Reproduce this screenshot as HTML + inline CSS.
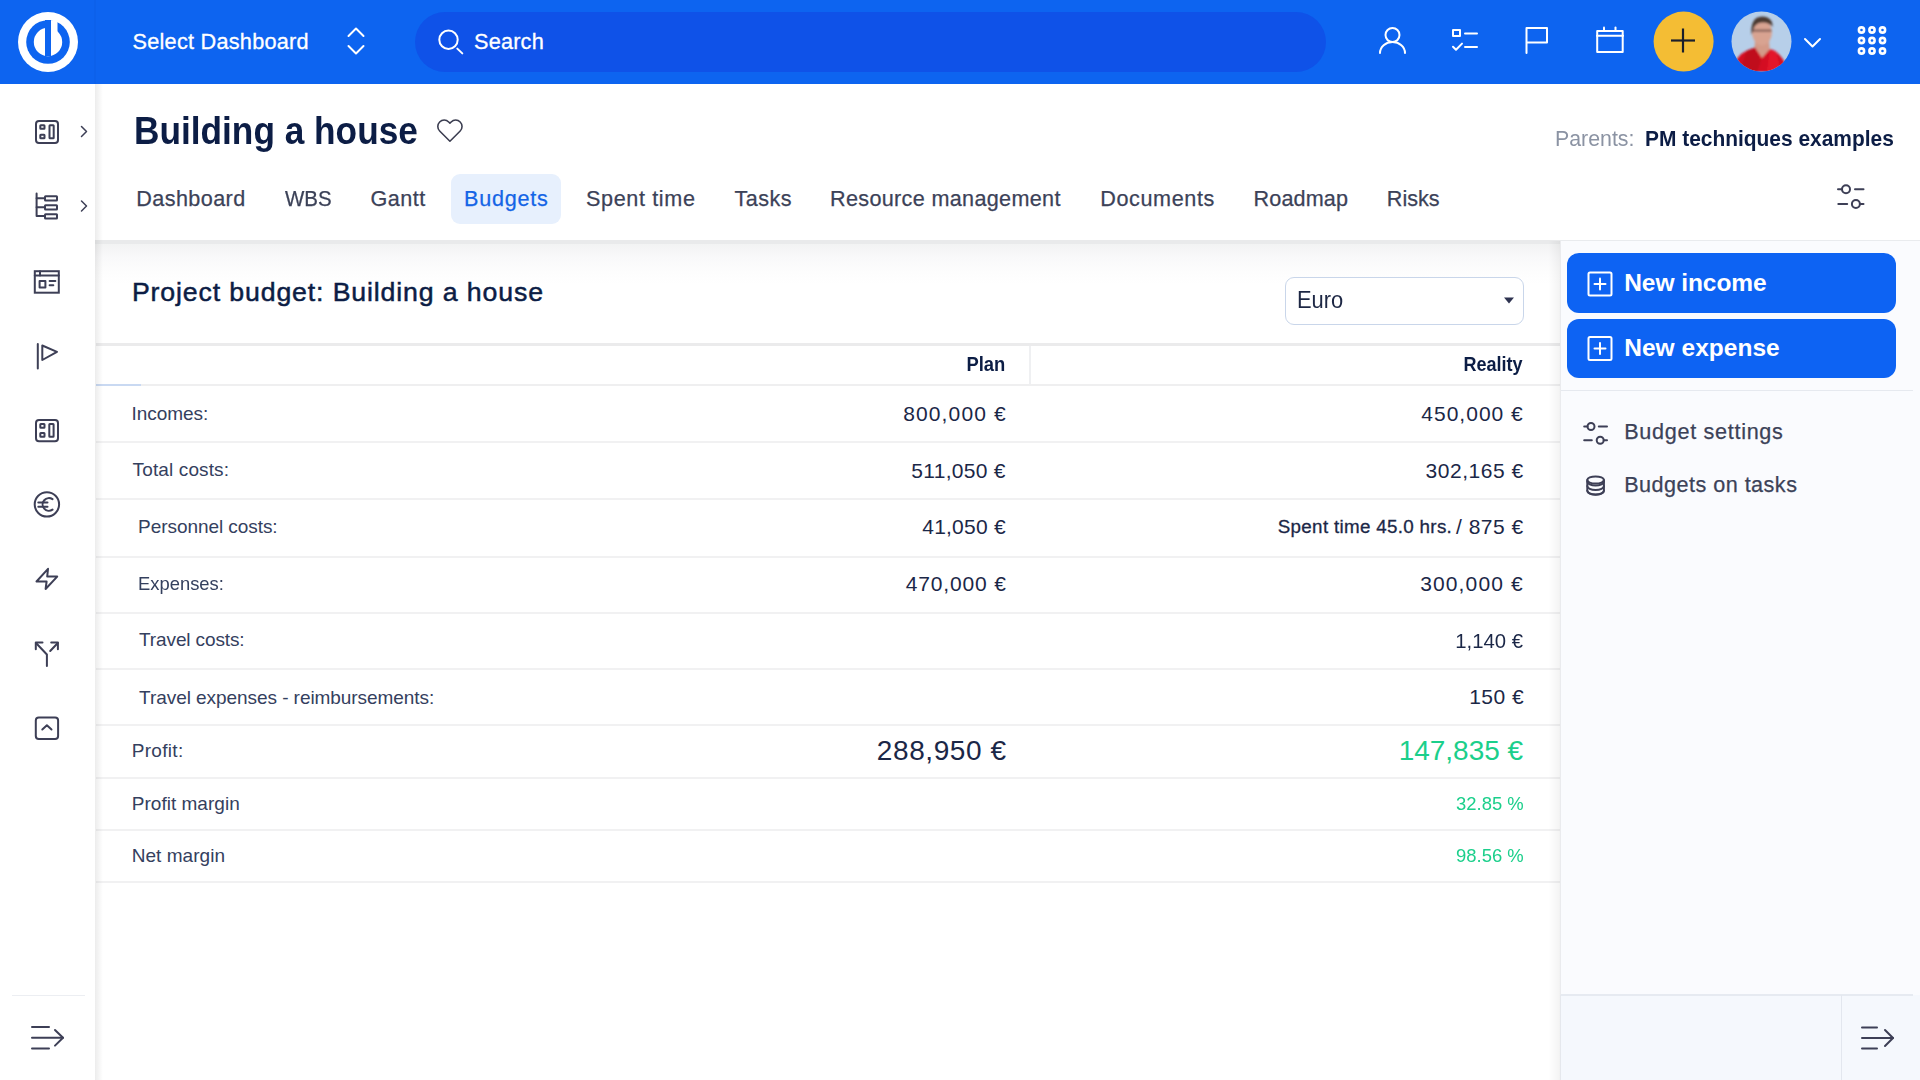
<!DOCTYPE html>
<html><head><meta charset="utf-8">
<style>
*{box-sizing:border-box;margin:0;padding:0}
html,body{width:1920px;height:1080px;overflow:hidden;background:#fff;font-family:"Liberation Sans",sans-serif}
.a{position:absolute}
.t{position:absolute;white-space:nowrap;line-height:1}
svg{position:absolute;overflow:visible;left:0;top:0}
.si{stroke:#3d3f56;stroke-width:2;fill:none;stroke-linecap:round;stroke-linejoin:round}
.wi{stroke:#fff;stroke-width:2;fill:none;stroke-linecap:round;stroke-linejoin:round}
.hl{position:absolute;left:96px;width:1464px;height:2px;background:#f1f1f2}
</style></head><body>

<!-- TOP BAR -->
<div class="a" style="left:0;top:0;width:1920px;height:84px;background:#0d64f0"></div>
<div class="a" style="left:94px;top:0;width:2px;height:84px;background:rgba(0,0,40,0.025)"></div>
<svg width="96" height="84">
  <circle cx="48" cy="42" r="30" fill="#fff"/>
  <circle cx="48" cy="42" r="21.8" fill="#0d64f0"/>
  <circle cx="48" cy="42" r="14.2" fill="#fff"/>
  <rect x="45" y="20" width="6" height="36" fill="#0d64f0"/>
  <rect x="51" y="20.4" width="6.5" height="12" fill="#fff"/>
</svg>
<svg width="1" height="1">
  <polyline class="wi" points="348.5,36 356,28.5 363.5,36"/>
  <polyline class="wi" points="348.5,46 356,53.5 363.5,46"/>
</svg>
<div class="a" style="left:415px;top:12px;width:911px;height:60px;border-radius:30px;background:#0f52e8"></div>
<svg width="1" height="1">
  <circle class="wi" cx="448.5" cy="39.8" r="9.2"/>
  <line class="wi" x1="457.3" y1="48.6" x2="462.3" y2="53.4"/>
</svg>
<svg width="1" height="1">
  <circle class="wi" cx="1392.5" cy="35" r="7"/>
  <path class="wi" d="M1380 53 a12.5 11 0 0 1 25 0"/>
  <rect class="wi" x="1453" y="30" width="7" height="6" stroke-linecap="butt"/>
  <line class="wi" x1="1465" y1="33.5" x2="1477" y2="33.5"/>
  <polyline class="wi" points="1453,46.8 1456,49.8 1462,43.6" stroke-width="2.3"/>
  <line class="wi" x1="1465" y1="47" x2="1477" y2="47"/>
  <polyline class="wi" points="1526.5,53 1526.5,28 1547,28 1547,42.5 1527,42.5" stroke-linecap="butt"/>
  <rect class="wi" x="1597.2" y="31" width="25.5" height="21" stroke-width="2.2"/>
  <line class="wi" x1="1597" y1="35.8" x2="1623" y2="35.8" stroke-width="2.2"/>
  <line class="wi" x1="1604" y1="27.5" x2="1604" y2="31" stroke-width="2.2"/>
  <line class="wi" x1="1615.5" y1="27.5" x2="1615.5" y2="31" stroke-width="2.2"/>
  <circle cx="1683.6" cy="41.6" r="30" fill="#f4bd34" stroke="none"/>
  <line x1="1671" y1="40.5" x2="1695" y2="40.5" stroke="#1b1f2b" stroke-width="2.2"/>
  <line x1="1683" y1="28.5" x2="1683" y2="52.5" stroke="#1b1f2b" stroke-width="2.2"/>
  <polyline class="wi" points="1805,39 1812.5,46.5 1820,39"/>
  <g fill="none" stroke="#fff" stroke-width="2.6">
    <circle cx="1861.5" cy="30" r="2.6"/><circle cx="1872" cy="30" r="2.6"/><circle cx="1882.5" cy="30" r="2.6"/>
    <circle cx="1861.5" cy="40.5" r="2.6"/><circle cx="1872" cy="40.5" r="2.6"/><circle cx="1882.5" cy="40.5" r="2.6"/>
    <circle cx="1861.5" cy="51" r="2.6"/><circle cx="1872" cy="51" r="2.6"/><circle cx="1882.5" cy="51" r="2.6"/>
  </g>
</svg>
<svg style="left:1731px;top:11px" width="61" height="61">
  <defs><clipPath id="av"><circle cx="30.5" cy="30.5" r="30"/></clipPath>
  <filter id="bl" x="-20%" y="-20%" width="140%" height="140%"><feGaussianBlur stdDeviation="1.2"/></filter></defs>
  <g clip-path="url(#av)">
    <rect width="61" height="61" fill="#b7cfe9"/>
    <g filter="url(#bl)">
      <path d="M24 30 L38 30 L39 42 L31 50 L23 42 Z" fill="#d39a88"/>
      <ellipse cx="31" cy="21.5" rx="10" ry="13" fill="#d8a391"/>
      <path d="M20.5 24 Q19 6 31 5.5 Q42 6 41.5 16 Q38 11 31 11.5 Q23 12 22 20 Z" fill="#4b3b33"/>
      <rect x="21.5" y="18.5" width="19" height="2.2" fill="#6b4c45" opacity="0.75"/>
      <path d="M0 61 Q5 44 16 39.5 L24 36.5 L31 47 L39 38 Q52 42 58 61 Z" fill="#d40f22"/>
      <path d="M16 39.5 L24 36.5 L30 50 L26 61 L8 61 Z" fill="#b30c1a" opacity="0.6"/>
      <path d="M39 38 L45 40 L50 61 L36 61 Z" fill="#ec1a30" opacity="0.6"/>
    </g>
  </g>
</svg>

<!-- HEADER (white) -->
<svg width="1" height="1">
  <g transform="translate(436 116.6) scale(1.16)"><path d="M20.84 4.61a5.5 5.5 0 0 0-7.78 0L12 5.67l-1.06-1.06a5.5 5.5 0 0 0-7.78 7.78l1.06 1.06L12 21.23l7.78-7.78 1.06-1.06a5.5 5.5 0 0 0 0-7.78z" fill="none" stroke="#3b3d50" stroke-width="1.35" stroke-linejoin="round"/></g>
</svg>
<div class="a" style="left:451px;top:174px;width:110px;height:50px;border-radius:9px;background:#e7f0fd"></div>
<svg width="1" height="1">
  <g class="si" stroke-width="1.7">
    <circle cx="1846" cy="189.3" r="4"/>
    <line x1="1838" y1="189.3" x2="1842" y2="189.3"/>
    <line x1="1855" y1="189.3" x2="1863.5" y2="189.3"/>
    <circle cx="1855.9" cy="204" r="4"/>
    <line x1="1838.3" y1="204" x2="1847.2" y2="204"/>
    <line x1="1859.9" y1="204" x2="1863.5" y2="204"/>
  </g>
</svg>

<!-- MAIN CONTENT top shadow -->
<div class="a" style="left:95px;top:240px;width:1465px;height:4px;background:#e9eaeb"></div>
<div class="a" style="left:1560px;top:240px;width:360px;height:1px;background:#e9ebee"></div>
<div class="a" style="left:95px;top:244px;width:1465px;height:40px;background:linear-gradient(to bottom,#f2f3f3,#f9f9fa 35%,#fdfdfd 70%,#fff)"></div>

<!-- Euro select -->
<div class="a" style="left:1285px;top:277px;width:239px;height:48px;border:1.5px solid #c9d6ea;border-radius:9px;background:#fff"></div>
<svg width="1" height="1"><path d="M1504 297.5 L1514 297.5 L1509 303.5 Z" fill="#2e3350"/></svg>

<!-- table lines -->
<div class="hl" style="top:343px;height:3px;background:#ebebec"></div>
<div class="a" style="left:1029px;top:346px;width:2px;height:38px;background:#eff0f2"></div>
<div class="hl" style="top:384px;background:#efeff0"></div>
<div class="a" style="left:96px;top:384px;width:45px;height:2px;background:#c9d9f2"></div>
<div class="hl" style="top:441px"></div>
<div class="hl" style="top:497.5px"></div>
<div class="hl" style="top:555.5px"></div>
<div class="hl" style="top:611.5px"></div>
<div class="hl" style="top:668px"></div>
<div class="hl" style="top:724px"></div>
<div class="hl" style="top:777px"></div>
<div class="hl" style="top:829px"></div>
<div class="hl" style="top:881px"></div>

<!-- RIGHT PANEL -->
<div class="a" style="left:1560px;top:241px;width:360px;height:754px;background:#fafbfe"></div>
<div class="a" style="left:1560px;top:995px;width:360px;height:85px;background:#f5f8fd"></div>
<div class="a" style="left:1561px;top:994px;width:352px;height:1.5px;background:#e6eaf1"></div>
<div class="a" style="left:1841px;top:995px;width:1.2px;height:85px;background:#e3e7ef"></div>
<div class="a" style="left:1548px;top:241px;width:13px;height:839px;background:linear-gradient(to right,rgba(0,0,0,0),rgba(0,0,0,0.045) 85%,rgba(0,0,0,0.07))"></div>
<div class="a" style="left:1567px;top:253px;width:329px;height:60px;border-radius:12px;background:#0d63f3"></div>
<div class="a" style="left:1567px;top:319px;width:329px;height:59px;border-radius:12px;background:#0d63f3"></div>
<svg width="1" height="1">
  <g class="wi" stroke-width="1.8">
    <rect x="1588.5" y="272.5" width="23" height="23" rx="1.5"/>
    <line x1="1600" y1="278.5" x2="1600" y2="289.5"/><line x1="1594.5" y1="284" x2="1605.5" y2="284"/>
    <rect x="1588.5" y="337" width="23" height="23" rx="1.5"/>
    <line x1="1600" y1="343" x2="1600" y2="354"/><line x1="1594.5" y1="348.5" x2="1605.5" y2="348.5"/>
  </g>
</svg>
<div class="a" style="left:1561px;top:389.5px;width:352px;height:1.5px;background:#e6e9ef"></div>
<svg width="1" height="1">
  <g class="si" stroke-width="1.7">
    <circle cx="1591" cy="426.5" r="3.5"/>
    <line x1="1584.2" y1="426.5" x2="1587.5" y2="426.5"/>
    <line x1="1598.8" y1="426.5" x2="1607" y2="426.5"/>
    <circle cx="1600.2" cy="440.3" r="3.5"/>
    <line x1="1584.2" y1="440.3" x2="1591.8" y2="440.3"/>
    <line x1="1603.7" y1="440.3" x2="1607" y2="440.3"/>
    <ellipse cx="1595.6" cy="480" rx="8.3" ry="3.6"/>
    <path d="M1587.3 480 v10.8 a8.3 3.6 0 0 0 16.6 0 v-10.8"/>
    <path d="M1587.3 481.5 a8.3 4 0 0 0 16.6 0"/>
    <path d="M1587.3 486 a8.3 4 0 0 0 16.6 0"/>
    <path d="M1587.3 490.8 a8.3 4 0 0 0 16.6 0"/>
  </g>
</svg>
<svg width="1" height="1">
  <g class="si" stroke-width="2.2" stroke-linecap="butt">
    <line x1="1862" y1="1027.5" x2="1877" y2="1027.5"/>
    <line x1="1862" y1="1038" x2="1893" y2="1038"/>
    <line x1="1862" y1="1048.5" x2="1877" y2="1048.5"/>
    <polyline points="1885,1030 1893,1038 1885,1046" stroke-linecap="round"/>
  </g>
</svg>

<!-- LEFT SIDEBAR -->
<div class="a" style="left:0;top:84px;width:95px;height:996px;background:#fff"></div>
<div class="a" style="left:95px;top:84px;width:8px;height:996px;background:linear-gradient(to right,rgba(0,0,0,0.075),rgba(0,0,0,0))"></div>
<svg width="1" height="1">
  <g class="si">
    <!-- 1 -->
    <rect x="36" y="121" width="22" height="22" rx="3"/>
    <rect x="40.3" y="125.2" width="4.2" height="3.6" rx="0.5"/>
    <rect x="40.3" y="134.7" width="4.2" height="3.6" rx="0.5"/>
    <rect x="49.5" y="125.2" width="4.2" height="13.1" rx="0.5"/>
    <polyline points="81.5,126.5 86.5,131.5 81.5,136.5" stroke-width="1.5"/>
    <!-- 2 tree -->
    <polyline points="36.6,193.5 36.6,216 44,216"/>
    <line x1="36.6" y1="198.3" x2="44" y2="198.3"/>
    <line x1="36.6" y1="207.3" x2="44" y2="207.3"/>
    <rect x="45" y="196.2" width="12" height="4.3" rx="0.5"/>
    <rect x="45" y="205.3" width="12" height="4.3" rx="0.5"/>
    <rect x="45" y="214.2" width="12" height="4.3" rx="0.5"/>
    <polyline points="81.5,201 86.5,206 81.5,211" stroke-width="1.5"/>
    <!-- 3 browser -->
    <rect x="34.8" y="271.2" width="24" height="21.5" stroke-linejoin="miter"/>
    <line x1="34.8" y1="275.5" x2="58.8" y2="275.5"/>
    <line x1="40" y1="271.2" x2="40" y2="275.5"/>
    <rect x="39.6" y="281" width="5.8" height="6.4"/>
    <line x1="49.6" y1="281" x2="55.4" y2="281"/>
    <line x1="49.6" y1="285.2" x2="53.3" y2="285.2"/>
    <!-- 4 flag -->
    <line x1="37.8" y1="344" x2="37.8" y2="368.5"/>
    <path d="M42.3 345.5 L42.3 360 L57 351.8 Z"/>
    <!-- 5 -->
    <rect x="36" y="420" width="22" height="21.3" rx="3"/>
    <rect x="40.3" y="424" width="4.2" height="3.8" rx="0.5"/>
    <rect x="40.3" y="433" width="4.2" height="3.8" rx="0.5"/>
    <rect x="49.3" y="424" width="4.3" height="12.8" rx="0.5"/>
    <!-- 6 euro -->
    <circle cx="46.9" cy="504.4" r="12.2"/>
    <path d="M52.5 499.2 A6.3 6.3 0 1 0 52.5 509.6"/>
    <line x1="38.3" y1="502.5" x2="47.5" y2="502.5"/>
    <line x1="38.3" y1="506.7" x2="47.5" y2="506.7"/>
    <!-- 7 bolt -->
    <path d="M48 568.8 L36.5 581.5 L46.6 581.5 L45.6 589 L57.2 576.6 L47.2 576.6 Z"/>
    <!-- 8 fork -->
    <path d="M46.9 666 L46.9 654.5 L36 643"/>
    <polyline points="42.5,642.5 35.8,642.5 35.8,649.2"/>
    <line x1="50.2" y1="651" x2="57.8" y2="643"/>
    <polyline points="51.2,642.5 57.9,642.5 57.9,649.2"/>
    <!-- 9 box up -->
    <rect x="35.8" y="717.5" width="22.3" height="21.5" rx="3"/>
    <polyline points="42.3,729.5 46.9,725.3 51.5,729.5"/>
  </g>
  <line x1="12" y1="995.5" x2="85" y2="995.5" stroke="#eceef2" stroke-width="1.2"/>
  <g class="si" stroke-width="2.2" stroke-linecap="butt">
    <line x1="32" y1="1027" x2="49" y2="1027"/>
    <line x1="32" y1="1037.8" x2="63" y2="1037.8"/>
    <line x1="32" y1="1048.6" x2="49" y2="1048.6"/>
    <polyline points="55,1030 63,1037.8 55,1045.6" stroke-linecap="round"/>
  </g>
</svg>

<div class="t" id="sel" style="left:132.50px;top:30.66px;font-size:21.7px;font-weight:400;color:#fff;letter-spacing:0.247px;-webkit-text-stroke:0.3px #fff;">Select Dashboard</div>
<div class="t" id="srch" style="left:474.00px;top:30.66px;font-size:21.7px;font-weight:400;color:#fff;letter-spacing:0.200px;-webkit-text-stroke:0.3px #fff;">Search</div>
<div class="t" id="ttl" style="left:134.00px;top:111.35px;font-size:39px;font-weight:700;color:#0c1d45;letter-spacing:0.000px;transform:scaleX(0.9035);transform-origin:left top;">Building a house</div>
<div class="t" id="tab1" style="left:136.30px;top:187.84px;font-size:21.6px;font-weight:400;color:#3c4258;letter-spacing:0.412px;-webkit-text-stroke:0.25px #3c4258;">Dashboard</div>
<div class="t" id="tab2" style="left:285.00px;top:187.84px;font-size:21.6px;font-weight:400;color:#3c4258;letter-spacing:0.000px;transform:scaleX(0.9490);transform-origin:left top;-webkit-text-stroke:0.25px #3c4258;">WBS</div>
<div class="t" id="tab3" style="left:370.40px;top:187.84px;font-size:21.6px;font-weight:400;color:#3c4258;letter-spacing:0.500px;-webkit-text-stroke:0.25px #3c4258;">Gantt</div>
<div class="t" id="tab4" style="left:464.00px;top:187.84px;font-size:21.6px;font-weight:400;color:#1464e6;letter-spacing:0.767px;-webkit-text-stroke:0.25px #1464e6;">Budgets</div>
<div class="t" id="tab5" style="left:586.00px;top:187.84px;font-size:21.6px;font-weight:400;color:#3c4258;letter-spacing:0.633px;-webkit-text-stroke:0.25px #3c4258;">Spent time</div>
<div class="t" id="tab6" style="left:734.60px;top:187.84px;font-size:21.6px;font-weight:400;color:#3c4258;letter-spacing:0.425px;-webkit-text-stroke:0.25px #3c4258;">Tasks</div>
<div class="t" id="tab7" style="left:830.00px;top:187.84px;font-size:21.6px;font-weight:400;color:#3c4258;letter-spacing:0.333px;-webkit-text-stroke:0.25px #3c4258;">Resource management</div>
<div class="t" id="tab8" style="left:1100.25px;top:187.84px;font-size:21.6px;font-weight:400;color:#3c4258;letter-spacing:0.613px;-webkit-text-stroke:0.25px #3c4258;">Documents</div>
<div class="t" id="tab9" style="left:1253.60px;top:187.84px;font-size:21.6px;font-weight:400;color:#3c4258;letter-spacing:0.117px;-webkit-text-stroke:0.25px #3c4258;">Roadmap</div>
<div class="t" id="tab10" style="left:1386.80px;top:187.84px;font-size:21.6px;font-weight:400;color:#3c4258;letter-spacing:0.000px;-webkit-text-stroke:0.25px #3c4258;">Risks</div>
<div class="t" id="par" style="left:1554.80px;top:127.70px;font-size:22px;font-weight:400;color:#8b93a3;letter-spacing:0.000px;transform:scaleX(0.9696);transform-origin:left top;">Parents:</div>
<div class="t" id="pm" style="left:1644.50px;top:127.70px;font-size:22px;font-weight:700;color:#0c1d45;letter-spacing:0.000px;transform:scaleX(0.9508);transform-origin:left top;">PM techniques examples</div>
<div class="t" id="pb" style="left:131.90px;top:279.20px;font-size:26.7px;font-weight:400;color:#0c1d45;letter-spacing:0.865px;-webkit-text-stroke:0.5px #0c1d45;">Project budget: Building a house</div>
<div class="t" id="euro" style="left:1297.00px;top:289.35px;font-size:23px;font-weight:400;color:#1d2744;letter-spacing:0.000px;transform:scaleX(0.9522);transform-origin:left top;">Euro</div>
<div class="t" id="plan" style="right:914.50px;top:353.70px;font-size:20px;font-weight:700;color:#0c1d45;letter-spacing:0.000px;transform:scaleX(0.9200);transform-origin:right top;">Plan</div>
<div class="t" id="real" style="right:397.00px;top:353.70px;font-size:20px;font-weight:700;color:#0c1d45;letter-spacing:0.000px;transform:scaleX(0.9015);transform-origin:right top;">Reality</div>
<div class="t" id="l1" style="left:131.60px;top:403.85px;font-size:19px;font-weight:400;color:#34405e;letter-spacing:-0.050px;">Incomes:</div>
<div class="t" id="l2" style="left:132.60px;top:460.10px;font-size:19px;font-weight:400;color:#34405e;letter-spacing:0.127px;">Total costs:</div>
<div class="t" id="l3" style="left:138.10px;top:516.85px;font-size:19px;font-weight:400;color:#34405e;letter-spacing:-0.060px;">Personnel costs:</div>
<div class="t" id="l4" style="left:138.10px;top:573.85px;font-size:19px;font-weight:400;color:#34405e;letter-spacing:0.000px;transform:scaleX(0.9678);transform-origin:left top;">Expenses:</div>
<div class="t" id="l5" style="left:139.10px;top:630.45px;font-size:19px;font-weight:400;color:#34405e;letter-spacing:-0.125px;">Travel costs:</div>
<div class="t" id="l6" style="left:139.10px;top:687.65px;font-size:19px;font-weight:400;color:#34405e;letter-spacing:-0.059px;">Travel expenses - reimbursements:</div>
<div class="t" id="l7" style="left:131.75px;top:741.35px;font-size:19px;font-weight:400;color:#34405e;letter-spacing:0.308px;">Profit:</div>
<div class="t" id="l8" style="left:131.75px;top:793.85px;font-size:19px;font-weight:400;color:#34405e;letter-spacing:0.021px;">Profit margin</div>
<div class="t" id="l9" style="left:131.75px;top:845.55px;font-size:19px;font-weight:400;color:#34405e;letter-spacing:0.039px;">Net margin</div>
<div class="t" id="v1" style="right:913.20px;top:403.40px;font-size:21px;font-weight:400;color:#1b2747;letter-spacing:1.137px;">800,000 €</div>
<div class="t" id="v2" style="right:914.20px;top:459.75px;font-size:21px;font-weight:400;color:#1b2747;letter-spacing:0.287px;">511,050 €</div>
<div class="t" id="v3" style="right:914.20px;top:516.15px;font-size:21px;font-weight:400;color:#1b2747;letter-spacing:0.229px;">41,050 €</div>
<div class="t" id="v4" style="right:913.20px;top:573.15px;font-size:21px;font-weight:400;color:#1b2747;letter-spacing:0.850px;">470,000 €</div>
<div class="t" id="v5" style="right:913.40px;top:736.50px;font-size:28px;font-weight:400;color:#1b2747;letter-spacing:0.575px;">288,950 €</div>
<div class="t" id="r1" style="right:396.20px;top:403.40px;font-size:21px;font-weight:400;color:#1b2747;letter-spacing:1.012px;">450,000 €</div>
<div class="t" id="r2" style="right:396.20px;top:459.75px;font-size:21px;font-weight:400;color:#1b2747;letter-spacing:0.537px;">302,165 €</div>
<div class="t" id="r3a" style="left:1277.75px;top:518.02px;font-size:18.8px;font-weight:400;color:#1b2747;letter-spacing:0.316px;-webkit-text-stroke:0.3px #1b2747;">Spent time 45.0 hrs.</div>
<div class="t" id="r3b" style="right:396.20px;top:516.15px;font-size:21px;font-weight:400;color:#1b2747;letter-spacing:0.517px;">/ 875 €</div>
<div class="t" id="r4" style="right:396.20px;top:573.15px;font-size:21px;font-weight:400;color:#1b2747;letter-spacing:1.137px;">300,000 €</div>
<div class="t" id="r5" style="right:396.80px;top:630.35px;font-size:21px;font-weight:400;color:#1b2747;letter-spacing:0.000px;transform:scaleX(0.9667);transform-origin:right top;">1,140 €</div>
<div class="t" id="r6" style="right:395.80px;top:686.35px;font-size:21px;font-weight:400;color:#1b2747;letter-spacing:0.500px;">150 €</div>
<div class="t" id="r7" style="right:396.80px;top:736.50px;font-size:28px;font-weight:400;color:#1bcf8b;letter-spacing:0.000px;">147,835 €</div>
<div class="t" id="r8" style="right:396.00px;top:793.85px;font-size:19px;font-weight:400;color:#1bcf8b;letter-spacing:0.000px;transform:scaleX(0.9706);transform-origin:right top;">32.85 %</div>
<div class="t" id="r9" style="right:396.00px;top:845.65px;font-size:19px;font-weight:400;color:#1bcf8b;letter-spacing:0.000px;transform:scaleX(0.9706);transform-origin:right top;">98.56 %</div>
<div class="t" id="bi" style="left:1624.20px;top:271.07px;font-size:24.5px;font-weight:700;color:#fff;letter-spacing:-0.056px;">New income</div>
<div class="t" id="be" style="left:1624.20px;top:336.07px;font-size:24.5px;font-weight:700;color:#fff;letter-spacing:0.030px;">New expense</div>
<div class="t" id="bs" style="left:1624.20px;top:421.24px;font-size:21.6px;font-weight:400;color:#3c4258;letter-spacing:0.700px;-webkit-text-stroke:0.25px #3c4258;">Budget settings</div>
<div class="t" id="bt" style="left:1624.20px;top:474.44px;font-size:21.6px;font-weight:400;color:#3c4258;letter-spacing:0.473px;-webkit-text-stroke:0.25px #3c4258;">Budgets on tasks</div>
</body></html>
